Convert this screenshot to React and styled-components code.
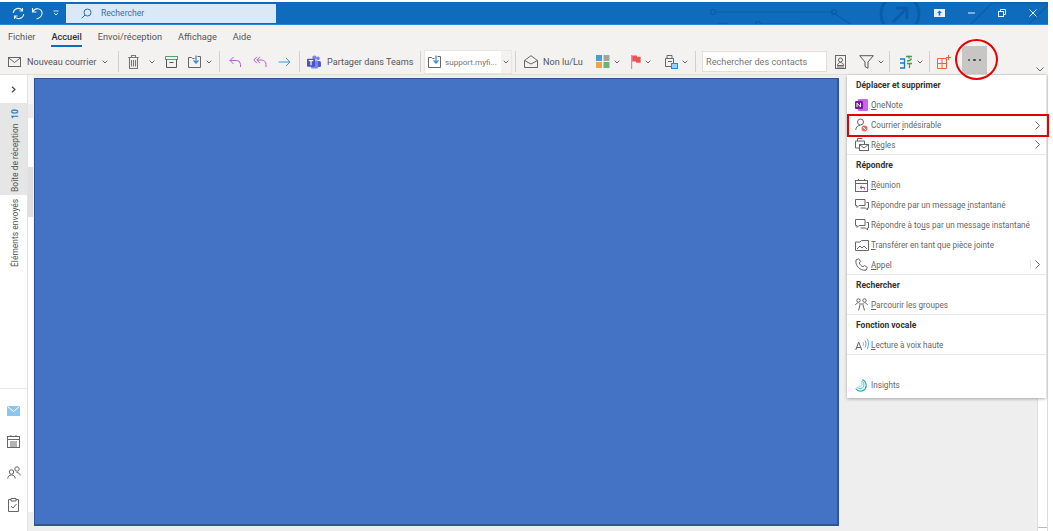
import React from 'react';
import styled, { createGlobalStyle } from 'styled-components';

const GlobalStyle = createGlobalStyle`
	html, body { margin: 0; padding: 0; background: #fff; }
	body { font-family: Roboto, "Open Sans", "Liberation Sans", sans-serif; color: #444; overflow: hidden; }
	* { box-sizing: border-box; }
	svg { flex: none; }
`;

const Icon = ({ w = 14, h = 14, children }) => (
	<svg width={w} height={h} viewBox={`0 0 ${w} ${h}`} fill="none" stroke="#666" strokeWidth="1">
		{children}
	</svg>
);

const Chevron = () => (
	<ChevronBox>
		<svg width="6" height="4" viewBox="0 0 6 4" fill="none" stroke="#666" strokeWidth="1">
			<path d="M.7.7 3 3 5.3.7" />
		</svg>
	</ChevronBox>
);

const ribbonIcons = {
	mail: (
		<Icon w={13} h={10}>
			<rect x=".5" y=".5" width="12" height="9" />
			<path d="M.5.8 6.5 5.5 12.5.8" />
		</Icon>
	),
	trash: (
		<Icon w={11} h={14}>
			<path d="M1.5 3v10.5h8V3M.2 2.5h10.6M3.5 2V.5h4V2M3.5 5v6.5M5.5 5v6.5M7.5 5v6.5" stroke="#777" strokeWidth="1.1" />
		</Icon>
	),
	archive: (
		<Icon w={13} h={12}>
			<rect x=".5" y=".5" width="12" height="3" stroke="#5a9e6f" />
			<path d="M1.5 3.5v8h10v-8M4.5 6.5h4" stroke="#555" />
		</Icon>
	),
	move: (
		<Icon w={14} h={13}>
			<path d="M.5 2.5h3l1 1h2M.5 2.5v10h12V5M9.5 1.5h3V5" stroke="#666" />
			<path d="M8 .5v7M5.500 5.3 8 8l2.500-2.700" stroke="#2b88d8" strokeWidth="1.2" />
		</Icon>
	),
	undo: (
		<Icon w={13} h={12}>
			<path d="M4.5 1 1 4.5 4.5 8M1 4.5h6.500a4 4 0 0 1 4 4V11" stroke="#b65fc4" />
		</Icon>
	),
	replyAll: (
		<Icon w={14} h={12}>
			<path d="M4 .8.8 4 4 7.2M7 .8 3.8 4 7 7.2M3.8 4h4.700a4.500 4.500 0 0 1 4.500 4.500V11" stroke="#b65fc4" />
		</Icon>
	),
	forward: (
		<Icon w={13} h={10}>
			<path d="M8 1l4 4-4 4M12 5H.5" stroke="#3a96dd" />
		</Icon>
	),
	teams: (
		<svg width="14" height="14" viewBox="0 0 14 14">
			<circle cx="11" cy="3.4" r="1.8" fill="#7b83eb" />
			<circle cx="7.5" cy="2.6" r="2.2" fill="#7b83eb" />
			<rect x="9" y="6" width="5" height="6" rx="1.5" fill="#5059c9" />
			<rect x="4" y="5.4" width="7" height="8" rx="1" fill="#7b83eb" />
			<rect x="0" y="3.8" width="8" height="8" rx="1" fill="#4b53bc" />
			<path d="M1.8 5.6h4.400M4 5.6v4.600" stroke="#fff" strokeWidth="1.2" />
		</svg>
	),
	envelopeOpen: (
		<Icon w={14} h={13}>
			<path d="M.5 5.5 7 .7l6.500 4.800v7h-13zM.5 5.5 7 9l6.500-3.500" />
		</Icon>
	),
	categories: (
		<svg width="14" height="13" viewBox="0 0 14 13">
			<rect width="6" height="6" fill="#4a9bdc" />
			<rect x="7.5" width="6" height="6" fill="#a3a3a3" />
			<rect y="7" width="6" height="6" fill="#f2a33a" />
			<rect x="7.5" y="7" width="6" height="6" fill="#6fb36f" />
		</svg>
	),
	flag: (
		<svg width="10" height="14" viewBox="0 0 10 14" fill="#e8545a">
			<rect x="0" y="0" width="1.2" height="14" fill="#e8888a" />
			<path d="M1.2.6H6v1.200h3.600v6H5V6.600H1.200z" />
		</svg>
	),
	rules: (
		<Icon w={13} h={14}>
			<path d="M2 .5h5v3H2zM.5 3.5h8v8h-8zM3 6.5h4" stroke="#666" />
			<rect x="6.5" y="8.5" width="6" height="5" fill="#9fd0f2" stroke="#2b88d8" />
		</Icon>
	),
	contact: (
		<Icon w={11} h={14}>
			<rect x=".5" y=".5" width="10" height="13" />
			<circle cx="5.5" cy="5" r="2" />
			<path d="M2.3 10.5c.5-2 1.600-3 3.200-3s2.700 1 3.200 3zM2 12h7" />
		</Icon>
	),
	filter: (
		<Icon w={15} h={14}>
			<path d="M.7.7h13.600L9 7v6.300L6 11.500V7z" stroke="#555" />
		</Icon>
	),
	translate: (
		<svg width="14" height="14" viewBox="0 0 14 14" fill="none" strokeWidth="1.3">
			<path d="M1 4h5M5.5 4v9H1M1 8h4.500" stroke="#1b79c9" />
			<path d="M7 1.5h6M10 .5v3M8 6c2 0 4-1 4.500-2.500M8 8.500h5M10.500 8.500V13" stroke="#4a9b4f" />
		</svg>
	),
	addins: (
		<Icon w={14} h={14}>
			<path d="M.5 3.5h9v10h-9zM.5 8.5h9M5 3.5v10" stroke="#e8643c" />
			<path d="M11.5 0v5M9 2.5h5" stroke="#e8643c" />
		</Icon>
	),
};

const menuIcons = {
	onenote: (
		<svg width="13" height="12" viewBox="0 0 13 12">
			<rect x="3" width="10" height="12" rx="1" fill="#ca64ea" />
			<rect y="2" width="8" height="8" rx="1" fill="#7719aa" />
			<path d="M2 8V4l3.500 4V4" stroke="#fff" fill="none" />
		</svg>
	),
	junk: (
		<svg width="13" height="14" viewBox="0 0 13 14" fill="none" stroke="#666">
			<circle cx="5.5" cy="4" r="3" />
			<path d="M.7 12c.4-3 2-4.500 4.300-4.500" />
			<circle cx="9.5" cy="10.5" r="3" fill="#ee6a6f" stroke="none" />
			<path d="M7.7 8.9l3.600 3.200" stroke="#fff" />
		</svg>
	),
	rules: (
		<Icon w={14} h={13}>
			<path d="M.5 3h9v7h-9zM2.5 3V.5h5" />
			<rect x="4.5" y="6.5" width="9" height="6" fill="#fff" />
			<path d="M4.5 6.5 9 10l4.500-3.500" />
		</Icon>
	),
	meeting: (
		<Icon w={13} h={13}>
			<rect x=".5" y="1.5" width="12" height="11" />
			<path d="M.5 4.5h12M3.5 0v2M9.5 0v2" />
			<path d="M5 8.5h4.500v2M5 8.5 7 6.800M5 8.500l2 1.700" stroke="#b146c2" />
		</Icon>
	),
	chat: (
		<Icon w={14} h={12}>
			<path d="M.5.5h9.500v6H4L2 8.500V6.500H.5z" />
			<path d="M11.5 3.5h2v5.500h-1v2l-2-2h-5" />
		</Icon>
	),
	attach: (
		<Icon w={14} h={11}>
			<path d="M.5 2v8.500h13V.5H6.500L5 2z" />
			<path d="M2 9l3-3 2 2 2-2 3 3" />
		</Icon>
	),
	phone: (
		<Icon w={13} h={13}>
			<path d="M3.7.7 1 2c-.6 3 .5 5.500 2.400 7.500 2 2 4.600 3.200 7.600 2.600l1.300-2.700-2.800-1.900-1.500 1.300C6.500 8.200 5 6.700 4.300 5l1.300-1.500z" />
		</Icon>
	),
	groups: (
		<Icon w={13} h={13}>
			<circle cx="3.5" cy="2.5" r="1.7" />
			<circle cx="9.5" cy="2.5" r="1.7" />
			<path d="M.5 7c.5-1.500 1.500-2.200 3-2.200M12.500 7c-.5-1.500-1.500-2.200-3-2.200M4 6h5M5 7 3.500 12.500M8 7l1.500 5.500" />
		</Icon>
	),
	speak: (
		<svg width="14" height="13" viewBox="0 0 14 13" fill="none">
			<path d="M.7 12 3.700 4l3 8M1.700 9.500h4" stroke="#666" />
			<path d="M8 4.500c.7 1 .7 2 0 3M10 2.500c1.300 2 1.300 5 0 7M12 .7c2 3 2 7.500 0 10.500" stroke="#5aa9e6" />
		</svg>
	),
	insights: (
		<svg width="13" height="13" viewBox="0 0 13 13" fill="none" stroke="#2ea8b8" strokeWidth="1.2">
			<path d="M.7 9.500c2 3.300 7 3.300 9.300.6 2.300-3 1.500-7.800-2.600-9.500" />
			<path d="M1.800 8c1.500 2 5 2.200 6.500 0 1.400-2.200.5-5-2-6" stroke="#6ccbd6" />
			<path d="M3.500 7c1 .8 2.500.6 3.200-.5.600-1 .2-2.300-.9-2.900" stroke="#9be0e6" />
		</svg>
	),
};

const menu = [
	{ head: 'Déplacer et supprimer' },
	{ icon: 'onenote', label: <><u>O</u>neNote</> },
	{ icon: 'junk', label: <>Courrier <u>i</u>ndésirable</>, more: true },
	{ icon: 'rules', label: <>R<u>è</u>gles</>, more: true, line: true },
	{ head: 'Répondre' },
	{ icon: 'meeting', label: <><u>R</u>éunion</> },
	{ icon: 'chat', label: <>Répondre par un message <u>i</u>nstantané</> },
	{ icon: 'chat', label: <>Répondre à to<u>u</u>s par un message instantané</> },
	{ icon: 'attach', label: <><u>T</u>ransférer en tant que pièce jointe</> },
	{ icon: 'phone', label: <><u>A</u>ppel</>, more: true, split: true, line: true },
	{ head: 'Rechercher' },
	{ icon: 'groups', label: <><u>P</u>arcourir les groupes</>, line: true },
	{ head: 'Fonction vocale' },
	{ icon: 'speak', label: <><u>L</u>ecture à voix haute</>, line: true },
	{ blank: true },
	{ icon: 'insights', label: 'Insights' },
];

const App = () => (
	<Page>
		<GlobalStyle />
		<TitleBar>
			<Circuit width="350" height="23" viewBox="0 0 350 23" fill="none" stroke="#0b5ca8" strokeWidth="1.2">
				<circle cx="15" cy="10" r="2.5" />
				<path d="M18 10h116l20 13" />
				<circle cx="136" cy="10" r="2.5" />
				<circle cx="25" cy="31" r="10" />
				<circle cx="60" cy="22" r="2.5" />
				<path d="M62 22h40" />
				<circle cx="202" cy="12" r="19" strokeWidth="3" />
				<path d="M195 20 209 6M198 6h11v11" strokeWidth="3" />
				<path d="M272 23l22-22h56M330 23l22-22" />
			</Circuit>
			<QuickIcon>
				<svg width="13" height="13" viewBox="0 0 13 13" fill="none" stroke="#e8f1fa" strokeWidth="1.1">
					<path d="M1.3 6a5 5 0 0 1 9-2.500M11.700 7a5 5 0 0 1-9 2.500M10.500 1v3H7.500M2.500 12V9h3" />
				</svg>
			</QuickIcon>
			<QuickIcon>
				<svg width="13" height="13" viewBox="0 0 13 13" fill="none" stroke="#e8f1fa" strokeWidth="1.1">
					<path d="M1.5 1v4h4M1.500 5C3 2.500 5 1.500 7 1.700c3 .4 4.500 3 4 5.300-.4 2-2.500 4-5.500 5" />
				</svg>
			</QuickIcon>
			<Customize>
				<svg width="6" height="6" viewBox="0 0 6 6" fill="none" stroke="#cfe2f3">
					<path d="M.5 1h5M1 3l2 2 2-2" />
				</svg>
			</Customize>
			<SearchBox>
				<svg width="11" height="11" viewBox="0 0 11 11" fill="none" stroke="#2b6ca8">
					<circle cx="6.5" cy="4.5" r="3.5" />
					<path d="M4 7 .7 10.300" />
				</svg>
				<span>Rechercher</span>
			</SearchBox>
			<WindowButtons>
				<svg width="11" height="8" viewBox="0 0 11 8" fill="#e6f0fa">
					<path d="M0 0h11v8H0zM5.500 1.500 3 4h1.700v2.500h1.600V4H8z" fillRule="evenodd" />
				</svg>
				<svg width="7" height="2" viewBox="0 0 7 2" stroke="#e6f0fa">
					<path d="M0 1h7" />
				</svg>
				<svg width="8" height="8" viewBox="0 0 8 8" fill="none" stroke="#e6f0fa">
					<rect x=".5" y="2.5" width="5" height="5" />
					<path d="M2.5 2.500v-2h5v5h-2" />
				</svg>
				<svg width="8" height="8" viewBox="0 0 8 8" stroke="#e6f0fa">
					<path d="M.5.500l7 7M7.500.500l-7 7" />
				</svg>
			</WindowButtons>
		</TitleBar>

		<Tabs>
			<Tab>Fichier</Tab>
			<Tab $active>Accueil</Tab>
			<Tab>Envoi/réception</Tab>
			<Tab>Affichage</Tab>
			<Tab>Aide</Tab>
		</Tabs>

		<Ribbon>
			<Group $w={118} $pad={8} $gap={6}>
				{ribbonIcons.mail}
				<RibbonLabel>Nouveau courrier</RibbonLabel>
				<Chevron />
			</Group>
			<Sep />
			<Group $w={100} $pad={9} $gap={10}>
				{ribbonIcons.trash}
				<Chevron />
				{ribbonIcons.archive}
				<IconPair>{ribbonIcons.move}<Chevron /></IconPair>
			</Group>
			<Sep />
			<Group $w={79} $pad={9} $gap={11}>
				{ribbonIcons.undo}
				{ribbonIcons.replyAll}
				{ribbonIcons.forward}
			</Group>
			<Sep />
			<Group $w={120} $pad={7} $gap={6}>
				{ribbonIcons.teams}
				<RibbonLabel>Partager dans Teams</RibbonLabel>
			</Group>
			<Sep />
			<QuickStep>
				<StepName>
					{ribbonIcons.move}
					<span>support.myfi...</span>
				</StepName>
				<StepArrow><Chevron /></StepArrow>
			</QuickStep>
			<Sep $ml={3} />
			<Group $w={179} $pad={8} $gap={0}>
				<IconPair $mr={5}>{ribbonIcons.envelopeOpen}</IconPair>
				<RibbonLabel $mr={13}>Non lu/Lu</RibbonLabel>
				<IconPair $mr={11}>{ribbonIcons.categories}<Chevron /></IconPair>
				<IconPair $mr={14}>{ribbonIcons.flag}<Chevron /></IconPair>
				<IconPair>{ribbonIcons.rules}<Chevron /></IconPair>
			</Group>
			<Sep />
			<ContactSearch>Rechercher des contacts</ContactSearch>
			<Group $w={62} $pad={8} $gap={13}>
				{ribbonIcons.contact}
				<IconPair>{ribbonIcons.filter}<Chevron /></IconPair>
			</Group>
			<Sep />
			<Group $w={39} $pad={9}>
				<IconPair>{ribbonIcons.translate}<Chevron /></IconPair>
			</Group>
			<Sep />
			<Group $w={32} $pad={7}>{ribbonIcons.addins}</Group>
			<MoreButton>
				<i /><i /><i />
			</MoreButton>
			<Collapse>
				<svg width="8" height="5" viewBox="0 0 8 5" fill="none" stroke="#666">
					<path d="M.5.500 4 4 7.500.500" />
				</svg>
			</Collapse>
		</Ribbon>

		<Body>
			<Rail>
				<RailToggle>
					<svg width="5" height="7" viewBox="0 0 5 7" fill="none" stroke="#444" strokeWidth="1.2">
						<path d="M1 .7 4 3.500 1 6.300" />
					</svg>
				</RailToggle>
				<RailTab $active>
					<span>Boîte de réception</span>
					<b>10</b>
				</RailTab>
				<RailTab>
					<span>Éléments envoyés</span>
				</RailTab>
				<RailIcons>
					<svg width="13" height="10" viewBox="0 0 13 10">
						<rect width="13" height="10" fill="#8cc6f0" />
						<path d="M.5.500 6.500 5.500 12.500.500" fill="none" stroke="#fff" />
					</svg>
					<Icon w={13} h={13}>
						<rect x=".5" y="1.5" width="12" height="11" />
						<path d="M.5 4.500h12M3 7h7M3 9h7M3 11h7M4 0v2M9 0v2" />
					</Icon>
					<Icon w={14} h={13}>
						<circle cx="4.5" cy="6" r="2.2" />
						<circle cx="10" cy="3" r="2.2" />
						<path d="M.7 12.500c.3-2.300 1.700-3.500 3.800-3.500s3.500 1.200 3.800 3.500M9.500 6.500c2 0 3.300 1 3.800 3" />
					</Icon>
					<Icon w={11} h={14}>
						<path d="M3 1.500H.5v12h10v-12H8M3 .500h5v2.500H3zM3 8l2 2 3.500-4" />
					</Icon>
				</RailIcons>
			</Rail>
			<Strip>
				<StripBand $h={29} $c="#f6f6f6" />
				<StripBand $h={14} $c="#ececec" />
				<StripBand $h={49} $c="#fff" />
				<StripBand $h={50} $c="#dfdfdf" />
				<StripBand $h={295} $c="#fff" />
				<StripBand $h={19} $c="#eee" />
			</Strip>
			<Reading>
				<Redaction />
				<SidePane />
			</Reading>
			<Menu>
				{menu.map((item, i) =>
					item.head ? (
						<MenuHead key={i}>{item.head}</MenuHead>
					) : (
						<MenuRow key={i} $line={item.line}>
							<MenuIcon>{menuIcons[item.icon]}</MenuIcon>
							<span>{item.label}</span>
							{item.more && (
								<More $split={item.split}>
									<svg width="5" height="9" viewBox="0 0 5 9" fill="none" stroke="#666">
										<path d="M.5.500 4.500 4.500.5 8.500" />
									</svg>
								</More>
							)}
						</MenuRow>
					)
				)}
				<Highlight />
			</Menu>
			<CircleMark />
		</Body>
	</Page>
);

const Page = styled.div`
	position: relative;
	width: 1053px;
	height: 531px;
	padding: 2px 5px 0 0;
	background: #fff;
	overflow: hidden;
`;

const TitleBar = styled.div`
	position: relative;
	height: 23px;
	display: flex;
	align-items: center;
	padding-left: 12px;
	background: #0f6cbd;
	border-bottom: 1px solid #2b88d8;
	overflow: hidden;
`;

const Circuit = styled.svg`
	position: absolute;
	top: 0;
	left: 698px;
`;

const QuickIcon = styled.div`
	display: flex;
	width: 13px;
	margin-right: 6px;
`;

const Customize = styled.div`
	display: flex;
	margin: 0 7px 0 3px;
`;

const SearchBox = styled.div`
	width: 210px;
	height: 19px;
	display: flex;
	align-items: center;
	gap: 9px;
	padding-left: 15px;
	background: #dbe9f6;
	font-size: 8.6px;
	color: #3d6f9f;
`;

const WindowButtons = styled.div`
	position: relative;
	margin-left: auto;
	width: 103px;
	margin-right: 11px;
	display: flex;
	align-items: center;
	justify-content: space-between;
`;

const Tabs = styled.div`
	height: 24px;
	display: flex;
	gap: 16px;
	padding: 4px 0 0 8px;
	background: #f3f2f1;
`;

const Tab = styled.div`
	height: 18px;
	font-size: 9.2px;
	line-height: 16px;
	color: ${(props) => (props.$active ? '#333' : '#555')};
	font-weight: ${(props) => (props.$active ? 500 : 400)};
	border-bottom: ${(props) => (props.$active ? '2px solid #0f6cbd' : 'none')};
`;

const Ribbon = styled.div`
	position: relative;
	height: 26px;
	display: flex;
	align-items: center;
	background: #f3f2f1;
	border-bottom: 1px solid #e1dfdd;
`;

const Group = styled.div`
	width: ${(props) => props.$w}px;
	flex: none;
	display: flex;
	align-items: center;
	gap: ${(props) => props.$gap ?? 7}px;
	padding-left: ${(props) => props.$pad}px;
`;

const IconPair = styled.div`
	display: flex;
	align-items: center;
	gap: 4px;
	margin-right: ${(props) => props.$mr ?? 0}px;
`;

const ChevronBox = styled.span`
	display: flex;
`;

const RibbonLabel = styled.span`
	font-size: 9.1px;
	color: #555;
	white-space: nowrap;
	margin-right: ${(props) => props.$mr ?? 0}px;
`;

const Sep = styled.div`
	width: 1px;
	height: 21px;
	flex: none;
	background: #d2d0ce;
	margin-left: ${(props) => props.$ml ?? 0}px;
`;

const QuickStep = styled.div`
	width: 88px;
	height: 24px;
	flex: none;
	margin-left: 3px;
	display: flex;
	background: #fff;
	border: 1px solid #e8e6e4;
`;

const StepName = styled.div`
	flex: 1;
	display: flex;
	align-items: center;
	gap: 3px;
	padding-left: 3px;
	font-size: 8.1px;
	color: #777;
	white-space: nowrap;
`;

const StepArrow = styled.div`
	width: 10px;
	display: flex;
	align-items: center;
	justify-content: center;
	background: #f3f2f1;
`;

const ContactSearch = styled.div`
	width: 125px;
	height: 21px;
	flex: none;
	margin-left: 6px;
	padding-left: 3px;
	background: #fff;
	border: 1px solid #e1dfdd;
	font-size: 9.2px;
	line-height: 19px;
	color: #777;
	white-space: nowrap;
`;

const MoreButton = styled.div`
	width: 25px;
	height: 28px;
	flex: none;
	align-self: flex-start;
	margin-top: -3px;
	display: flex;
	align-items: center;
	justify-content: center;
	gap: 3px;
	background: #c8c6c4;

	i {
		width: 2.4px;
		height: 2.4px;
		border-radius: 50%;
		background: #444;
	}
`;

const Collapse = styled.div`
	position: absolute;
	right: 4px;
	bottom: 2px;
	display: flex;
`;

const Body = styled.div`
	position: relative;
	height: 456px;
	display: flex;
	background: #eee;
`;

const Rail = styled.div`
	width: 28px;
	flex: none;
	display: flex;
	flex-direction: column;
	align-items: stretch;
	background: #fff;
	border-right: 1px solid #e4e4e4;
`;

const RailToggle = styled.div`
	height: 28px;
	display: flex;
	align-items: center;
	justify-content: center;
`;

const RailTab = styled.div`
	height: ${(props) => (props.$active ? 92 : 84)}px;
	display: flex;
	align-items: center;
	justify-content: flex-start;
	gap: 5px;
	writing-mode: vertical-rl;
	transform: rotate(180deg);
	padding-top: ${(props) => (props.$active ? 3 : 12)}px;
	padding-right: 3px;
	font-size: 8.5px;
	color: #555;
	white-space: nowrap;
	background: ${(props) => (props.$active ? '#e6e6e6' : 'transparent')};

	b {
		color: #1b79c9;
		font-weight: 700;
	}
`;

const RailIcons = styled.div`
	margin-top: auto;
	height: 143px;
	padding: 17px 0 19px;
	display: flex;
	flex-direction: column;
	align-items: center;
	justify-content: space-between;
	border-top: 1px solid #e8e8e8;
`;

const Strip = styled.div`
	width: 5px;
	flex: none;
	display: flex;
	flex-direction: column;
`;

const StripBand = styled.div`
	height: ${(props) => props.$h}px;
	background: ${(props) => props.$c};
`;

const Reading = styled.div`
	flex: 1;
	display: flex;
	padding: 3px 0 0 1px;
`;

const Redaction = styled.div`
	width: 805px;
	height: 448px;
	flex: none;
	background: #4472c4;
	border: 2px solid #2f5597;
	border-top-width: 1px;
	border-left-width: 1px;
`;

const SidePane = styled.div`
	position: relative;
	width: 11px;
	margin-left: auto;
	height: 456px;
	margin-top: -3px;
	background: #fff;
	border: 1px solid #ddd;
	border-width: 0 1px;

	&::after {
		content: '';
		position: absolute;
		top: 452px;
		left: 0;
		right: 0;
		height: 1px;
		background: #bbb;
	}
`;

const Menu = styled.div`
	position: absolute;
	top: 0;
	left: 847px;
	width: 199px;
	height: 323px;
	background: #fff;
	box-shadow: 0 1px 3px rgba(0, 0, 0, 0.3);
`;

const MenuHead = styled.div`
	height: 20px;
	padding-left: 9px;
	font-size: 8.5px;
	font-weight: 700;
	line-height: 20px;
	color: #333;
`;

const MenuRow = styled.div`
	height: 20px;
	display: flex;
	align-items: center;
	padding-left: 8px;
	font-size: 8.15px;
	color: #666;
	white-space: nowrap;
	border-bottom: ${(props) => (props.$line ? '1px solid #e8e8e8' : 'none')};
`;

const MenuIcon = styled.div`
	width: 16px;
	display: flex;
	justify-content: flex-start;
`;

const More = styled.div`
	margin-left: auto;
	margin-right: 6px;
	display: flex;
	padding-left: 4px;
	border-left: ${(props) => (props.$split ? '1px solid #e4e4e4' : 'none')};
`;

const Highlight = styled.div`
	position: absolute;
	top: 39px;
	left: 0;
	width: 202px;
	height: 23px;
	border: 2px solid #e60000;
`;

const CircleMark = styled.div`
	position: absolute;
	top: -36px;
	left: 955px;
	width: 43px;
	height: 41px;
	border: 2px solid #e60000;
	border-radius: 50%;
`;

export default App;
